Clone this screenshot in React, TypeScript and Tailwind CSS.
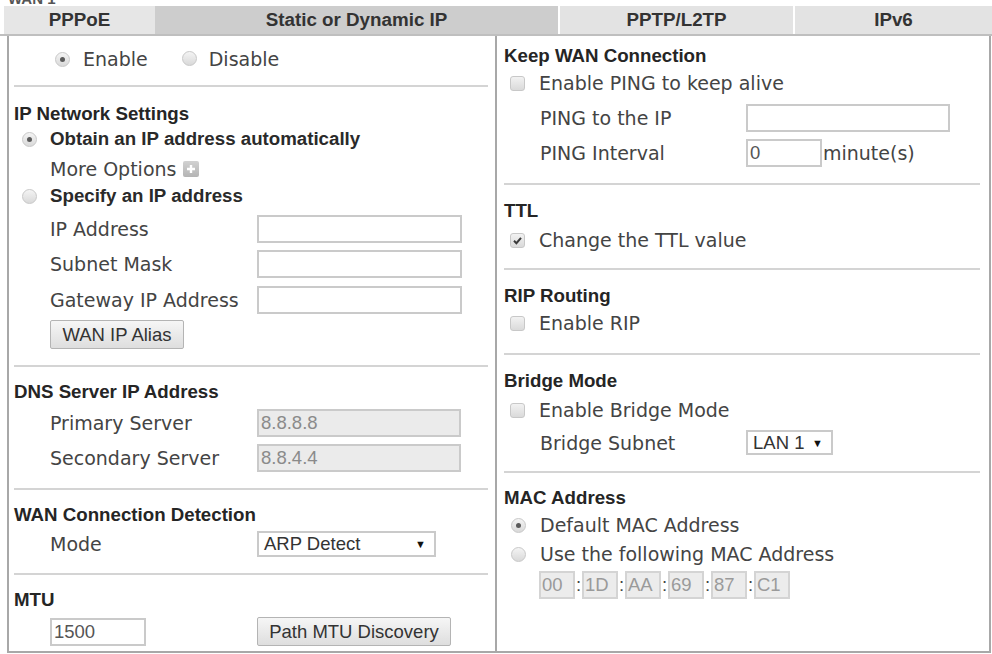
import React from "react";

const dv = "font-['DejaVu_Sans',Verdana,sans-serif]";
const ar = "font-['Liberation_Sans',Arial,sans-serif]";

function Radio({ checked }: { checked?: boolean }) {
  return (
    <span className="inline-flex w-[15px] h-[15px] shrink-0 items-center justify-center rounded-full border border-[#c8c8c8] bg-linear-to-b from-[#f4f4f4] to-[#d9d9d9]">
      {checked && <span className="w-[5px] h-[5px] rounded-full bg-[#5a5a5a]" />}
    </span>
  );
}

function Check({ checked }: { checked?: boolean }) {
  return (
    <span className="inline-flex w-[15px] h-[15px] shrink-0 items-center justify-center rounded-[3px] border border-[#c8c8c8] bg-linear-to-b from-[#f2f2f2] to-[#dadada]">
      {checked && (
        <svg width="11" height="11" viewBox="0 0 11 11">
          <path d="M2 5.8 L4.4 8.2 L9 2.8" fill="none" stroke="#3a3a3a" strokeWidth="2" />
        </svg>
      )}
    </span>
  );
}

function Sep({ className }: { className: string }) {
  return <div className={`h-[2px] bg-[#d4d4d4] ${className}`} />;
}

function Heading({ children, className }: { children: React.ReactNode; className: string }) {
  return (
    <div className={`h-[24px] pt-[2px] flex items-center font-bold text-[18.7px] leading-[22px] text-[#252525] ${ar} ${className}`}>
      {children}
    </div>
  );
}

function TextBox({ w, value, disabled }: { w: string; value?: string; disabled?: boolean }) {
  return (
    <div
      className={`${w} h-[28px] border-2 border-[#cacaca] flex items-center px-[2px] text-[18.5px] leading-[24px] ${ar} ${
        disabled ? "bg-[#ebebeb] text-[#8a8a8a]" : "bg-white text-[#555]"
      }`}
    >
      {value}
    </div>
  );
}

function Btn({ children, w }: { children: React.ReactNode; w: string }) {
  return (
    <div
      className={`${w} h-[29px] border border-[#b4b4b4] rounded-[2px] bg-linear-to-b from-[#f6f6f6] to-[#dedede] flex items-center justify-center text-[18.5px] leading-[24px] text-[#333] ${ar}`}
    >
      {children}
    </div>
  );
}

function Select({ w, value, h }: { w: string; value: string; h: string }) {
  return (
    <div className={`${w} ${h} border-2 border-[#cacaca] bg-white flex items-center justify-between pl-[5px] pr-[8px] text-[18.5px] leading-[22px] text-[#333] ${ar}`}>
      <span>{value}</span>
      <span className="text-[11px] text-[#111]">▼</span>
    </div>
  );
}

function Field({ label, children, className, lw }: { label: string; children: React.ReactNode; className: string; lw: string }) {
  return (
    <div className={`flex items-center ${className}`}>
      <span className={`${lw} text-[19px] leading-[24px] text-[#444] ${dv}`}>{label}</span>
      {children}
    </div>
  );
}

const tabs = [
  { name: "PPPoE", w: "w-[151px]", bg: "bg-[#e6e6e6]", border: "" },
  { name: "Static or Dynamic IP", w: "w-[403px]", bg: "bg-[#cdcdcd]", border: "" },
  { name: "PPTP/L2TP", w: "w-[235px]", bg: "bg-[#e3e3e3]", border: "border-l-2 border-white" },
  { name: "IPv6", w: "w-[199px]", bg: "bg-[#e3e3e3]", border: "border-l-2 border-white" },
];

const line = `h-[24px] flex items-center text-[19px] leading-[24px] text-[#444] ${dv}`;
const boldLine = `h-[24px] flex items-center font-bold text-[18.7px] leading-[24px] text-[#2a2a2a] ${ar}`;

export default function App() {
  return (
    <div className="w-[992px] h-[654px] bg-white overflow-hidden">
      {/* cut-off caption above the tabs */}
      <div className="h-[6px] overflow-hidden pl-[8px]">
        <div className={`-mt-[12px] text-[15px] font-bold text-[#555] ${ar}`}>WAN 1</div>
      </div>

      <div className="flex pl-[4px] h-[30px] border-b-2 border-[#bfbfbf]">
        {tabs.map((t) => (
          <div
            key={t.name}
            className={`${t.w} ${t.bg} ${t.border} flex items-center justify-center font-bold text-[18.8px] text-[#333] ${ar}`}
          >
            {t.name}
          </div>
        ))}
      </div>

      <div className="ml-[7px] w-[984px] h-[617px] border-2 border-t-0 border-[#a8a8a8] flex">
        {/* left column */}
        <div className="w-[488px] flex flex-col border-r-2 border-[#a8a8a8]">
          <div className={`mt-[11px] pl-[46px] ${line}`}>
            <Radio checked />
            <span className="ml-[13px]">Enable</span>
            <span className="ml-[34px]">
              <Radio />
            </span>
            <span className="ml-[12px]">Disable</span>
          </div>
          <Sep className="mt-[14px] ml-[5px] mr-[7px]" />

          <Heading className="mt-[14px] pl-[5px]">IP Network Settings</Heading>
          <div className={`mt-[2px] pl-[13px] ${boldLine}`}>
            <Radio checked />
            <span className="ml-[13px]">Obtain an IP address automatically</span>
          </div>
          <div className={`mt-[6px] pl-[41px] ${line}`}>
            <span>More Options</span>
            <span className="ml-[7px] w-[16px] h-[16px] rounded-[2px] bg-linear-to-b from-[#d2d2d2] to-[#b4b4b4] flex items-center justify-center">
              <svg width="10" height="10" viewBox="0 0 10 10">
                <path d="M5 1 V9 M1 5 H9" stroke="#fff" strokeWidth="2.4" />
              </svg>
            </span>
          </div>
          <div className={`mt-[3px] pl-[13px] ${boldLine}`}>
            <Radio />
            <span className="ml-[13px]">Specify an IP address</span>
          </div>
          <Field label="IP Address" lw="w-[207px]" className="mt-[7px] pl-[41px]">
            <TextBox w="w-[205px]" />
          </Field>
          <Field label="Subnet Mask" lw="w-[207px]" className="mt-[7px] pl-[41px]">
            <TextBox w="w-[205px]" />
          </Field>
          <Field label="Gateway IP Address" lw="w-[207px]" className="mt-[8px] pl-[41px]">
            <TextBox w="w-[205px]" />
          </Field>
          <div className="mt-[6px] pl-[41px]">
            <Btn w="w-[134px]">WAN IP Alias</Btn>
          </div>
          <Sep className="mt-[16px] ml-[5px] mr-[7px]" />

          <Heading className="mt-[12px] pl-[5px]">DNS Server IP Address</Heading>
          <Field label="Primary Server" lw="w-[207px]" className="mt-[6px] pl-[41px]">
            <TextBox w="w-[204px]" value="8.8.8.8" disabled />
          </Field>
          <Field label="Secondary Server" lw="w-[207px]" className="mt-[7px] pl-[41px]">
            <TextBox w="w-[204px]" value="8.8.4.4" disabled />
          </Field>
          <Sep className="mt-[16px] ml-[5px] mr-[7px]" />

          <Heading className="mt-[12px] pl-[5px]">WAN Connection Detection</Heading>
          <Field label="Mode" lw="w-[207px]" className="mt-[5px] pl-[41px]">
            <Select w="w-[179px]" h="h-[26px]" value="ARP Detect" />
          </Field>
          <Sep className="mt-[16px] ml-[5px] mr-[7px]" />

          <Heading className="mt-[12px] pl-[5px]">MTU</Heading>
          <div className="mt-[6px] pl-[41px] flex items-center">
            <TextBox w="w-[96px]" value="1500" />
            <div className="ml-[111px]">
              <Btn w="w-[194px]">Path MTU Discovery</Btn>
            </div>
          </div>
        </div>

        {/* right column */}
        <div className="w-[490px] flex flex-col">
          <Heading className="mt-[7px] pl-[7px]">Keep WAN Connection</Heading>
          <div className={`mt-[4px] pl-[13px] ${line}`}>
            <Check />
            <span className="ml-[14px]">Enable PING to keep alive</span>
          </div>
          <Field label="PING to the IP" lw="w-[206px]" className="mt-[9px] pl-[43px]">
            <TextBox w="w-[204px]" />
          </Field>
          <Field label="PING Interval" lw="w-[206px]" className="mt-[7px] pl-[43px]">
            <TextBox w="w-[76px]" value="0" />
            <span className={`ml-[1px] text-[19px] leading-[24px] text-[#444] ${dv}`}>minute(s)</span>
          </Field>
          <Sep className="mt-[16px] ml-[7px] mr-[7px]" />

          <Heading className="mt-[13px] pl-[7px]">TTL</Heading>
          <div className={`mt-[6px] pl-[13px] ${line}`}>
            <Check checked />
            <span className="ml-[14px]">Change the TTL value</span>
          </div>
          <Sep className="mt-[16px] ml-[7px] mr-[7px]" />

          <Heading className="mt-[13px] pl-[7px]">RIP Routing</Heading>
          <div className={`mt-[4px] pl-[13px] ${line}`}>
            <Check />
            <span className="ml-[14px]">Enable RIP</span>
          </div>
          <Sep className="mt-[18px] ml-[7px] mr-[7px]" />

          <Heading className="mt-[13px] pl-[7px]">Bridge Mode</Heading>
          <div className={`mt-[6px] pl-[13px] ${line}`}>
            <Check />
            <span className="ml-[14px]">Enable Bridge Mode</span>
          </div>
          <Field label="Bridge Subnet" lw="w-[206px]" className="mt-[8px] pl-[43px]">
            <Select w="w-[87px]" h="h-[25px]" value="LAN 1" />
          </Field>
          <Sep className="mt-[16px] ml-[7px] mr-[7px]" />

          <Heading className="mt-[12px] pl-[7px]">MAC Address</Heading>
          <div className={`mt-[4px] pl-[14px] ${line}`}>
            <Radio checked />
            <span className="ml-[14px]">Default MAC Address</span>
          </div>
          <div className={`mt-[5px] pl-[14px] ${line}`}>
            <Radio />
            <span className="ml-[14px]">Use the following MAC Address</span>
          </div>
          <div className={`mt-[5px] pl-[42px] flex items-center text-[18.5px] leading-[24px] ${ar}`}>
            {["00", "1D", "AA", "69", "87", "C1"].map((v, i) => (
              <React.Fragment key={v}>
                {i > 0 && <span className="w-[7px] text-center text-[#444]">:</span>}
                <div className="w-[36px] h-[28px] border-2 border-[#d4d4d4] bg-[#ececec] text-[#9a9a9a] flex items-center pl-[1px]">
                  {v}
                </div>
              </React.Fragment>
            ))}
          </div>
        </div>
      </div>
    </div>
  );
}
